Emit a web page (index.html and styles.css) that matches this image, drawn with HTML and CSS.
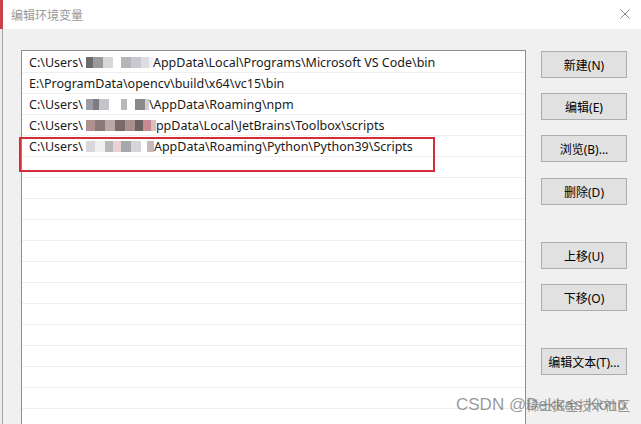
FILE: index.html
```html
<!DOCTYPE html>
<html lang="zh-CN">
<head>
<meta charset="utf-8">
<title>编辑环境变量</title>
<link rel="stylesheet" href="styles.css">
</head>
<body>
<div class="screen">
  <div class="edge">
    <div class="edge-top"></div>
    <div class="edge-rest"></div>
  </div>
  <div class="window">
    <div class="titlebar">
      <span class="title">编辑环境变量</span>
      <svg class="close" width="10" height="10" viewBox="0 0 10 10">
        <path d="M0.5 0.5 L9.5 9.5 M9.5 0.5 L0.5 9.5" stroke="#8a8a8a" stroke-width="1" fill="none"/>
      </svg>
    </div>
    <div class="content">
      <div class="list">
        <div class="row"><span>C:\Users\</span><span class="blur blur-a"></span><span>AppData\Local\Programs\Microsoft VS Code\bin</span></div>
        <div class="row"><span>E:\ProgramData\opencv\build\x64\vc15\bin</span></div>
        <div class="row"><span>C:\Users\</span><span class="blur blur-c"></span><span>\AppData\Roaming\npm</span></div>
        <div class="row"><span>C:\Users\</span><span class="blur blur-d"></span><span>ppData\Local\JetBrains\Toolbox\scripts</span></div>
        <div class="row"><span>C:\Users\</span><span class="blur blur-e"></span><span>AppData\Roaming\Python\Python39\Scripts</span></div>
        <div class="row"></div>
        <div class="row"></div>
        <div class="row"></div>
        <div class="row"></div>
        <div class="row"></div>
        <div class="row"></div>
        <div class="row"></div>
        <div class="row"></div>
        <div class="row"></div>
        <div class="row"></div>
        <div class="row"></div>
        <div class="row"></div>
        <div class="row"></div>
        <div class="highlight"></div>
      </div>
      <div class="buttons">
        <button class="btn">新建(N)</button>
        <button class="btn">编辑(E)</button>
        <button class="btn">浏览(B)...</button>
        <button class="btn btn-gap1">删除(D)</button>
        <button class="btn btn-sep">上移(U)</button>
        <button class="btn">下移(O)</button>
        <button class="btn btn-sep">编辑文本(T)...</button>
      </div>
    </div>
  </div>
  <div class="watermark">CSDN @<span class="wm-stack"><span class="wm-cn">稀土掘金技术社区</span><span class="wm-en">Dekkas Kono</span></span></div>
</div>
</body>
</html>
```

FILE: styles.css
```css
* {
  box-sizing: border-box;
}

html, body {
  margin: 0;
  padding: 0;
}

body {
  font-family: "Noto Sans", "Noto Sans CJK SC", sans-serif;
  font-size: 12px;
  color: #000;
  background: #f0f0f0;
}

.screen {
  position: relative;
  display: flex;
  width: 641px;
  height: 424px;
  overflow: hidden;
}

.edge {
  display: flex;
  flex-direction: column;
  width: 3px;
  flex: none;
}

.edge-top {
  height: 29px;
  background: #c8404a;
}

.edge-rest {
  flex: 1;
  background: #ececec;
  border-right: 1px solid #a6a6a6;
}

.window {
  flex: 1;
  display: flex;
  flex-direction: column;
  background: #f0f0f0;
  min-width: 0;
}

.titlebar {
  height: 29px;
  flex: none;
  background: #fff;
  display: flex;
  align-items: center;
  justify-content: space-between;
  padding: 0 11px 1px 8px;
}

.title {
  font-family: "Noto Sans CJK SC", sans-serif;
  font-size: 12px;
  color: #999;
}

.close {
  display: block;
}

.content {
  flex: 1;
  display: flex;
  gap: 15px;
  padding: 21px 14px 0 18px;
  min-height: 0;
}

.list {
  position: relative;
  width: 505px;
  flex: none;
  background: #fff;
  border: 1px solid #8a8d94;
  border-bottom: none;
  padding-top: 1px;
}

.row {
  height: 21px;
  border-bottom: 1px solid #efefef;
  padding-left: 7px;
  line-height: 22px;
  white-space: nowrap;
  font-size: 12.5px;
  color: #1a1a1a;
}

.blur {
  display: inline-block;
  height: 11px;
  vertical-align: -1px;
}

.blur-a {
  width: 70px;
  background: linear-gradient(to right,
    #ffffff 0 3px, #6c6c6c 3px 10px, #9a9a9a 10px 20px, #d8d8d8 20px 30px,
    #ffffff 30px 38px, #b6b6b8 38px 48px, #c8c8d0 48px 58px, #dcdce2 58px 66px, #f2f2f2 66px 70px);
}

.blur-c {
  width: 66px;
  background: linear-gradient(to right,
    #ffffff 0 3px, #9c9ca4 3px 10px, #7c7c84 10px 16px, #c4c4c8 16px 26px,
    #ffffff 26px 38px, #b8b8b8 38px 44px, #ffffff 44px 52px, #8a8a8a 52px 62px, #d0d0d0 62px 66px);
}

.blur-d {
  width: 73px;
  background: linear-gradient(to right,
    #ffffff 0 3px, #b09090 3px 12px, #8c7a7a 12px 22px, #b8a8a8 22px 32px,
    #7a6a6a 32px 42px, #a89090 42px 52px, #6c6060 52px 60px, #c88a90 60px 68px, #d8c0c0 68px 73px);
}

.blur-e {
  width: 71px;
  background: linear-gradient(to right,
    #ffffff 0 3px, #d8d8dc 3px 12px, #f0f0f0 12px 22px, #b8b8bc 22px 30px,
    #e8d0d4 30px 38px, #a8a8ac 38px 48px, #d6d6da 48px 58px, #ffffff 58px 64px, #c8b8bc 64px 71px);
}

.highlight {
  position: absolute;
  left: -3px;
  top: 86px;
  width: 416px;
  height: 35px;
  border: 2px solid #d42d38;
  pointer-events: none;
}

.buttons {
  display: flex;
  flex-direction: column;
  gap: 15px;
  width: 86px;
  flex: none;
  padding-top: 1px;
}

.btn {
  height: 27px;
  width: 86px;
  padding: 0;
  background: #e1e1e1;
  border: 1px solid #adadad;
  border-radius: 0;
  font-family: "Noto Sans", "Noto Sans CJK SC", sans-serif;
  font-size: 12px;
  color: #000;
  text-align: center;
}

.btn-gap1 {
  margin-top: 1px;
}

.btn-sep {
  margin-top: 22px;
}

.watermark {
  position: absolute;
  left: 456px;
  top: 394px;
  font-family: "Liberation Sans", "Noto Sans CJK SC", sans-serif;
  font-size: 17px;
  line-height: 22px;
  color: rgba(120, 120, 120, 0.75);
  white-space: nowrap;
}

.wm-stack {
  position: relative;
  display: inline-block;
}

.wm-cn {
  font-family: "Noto Sans CJK SC", sans-serif;
  font-size: 13px;
  letter-spacing: 0;
}

.wm-en {
  position: absolute;
  left: 0;
  top: 0;
  font-size: 16px;
  letter-spacing: 0.5px;
}
```
